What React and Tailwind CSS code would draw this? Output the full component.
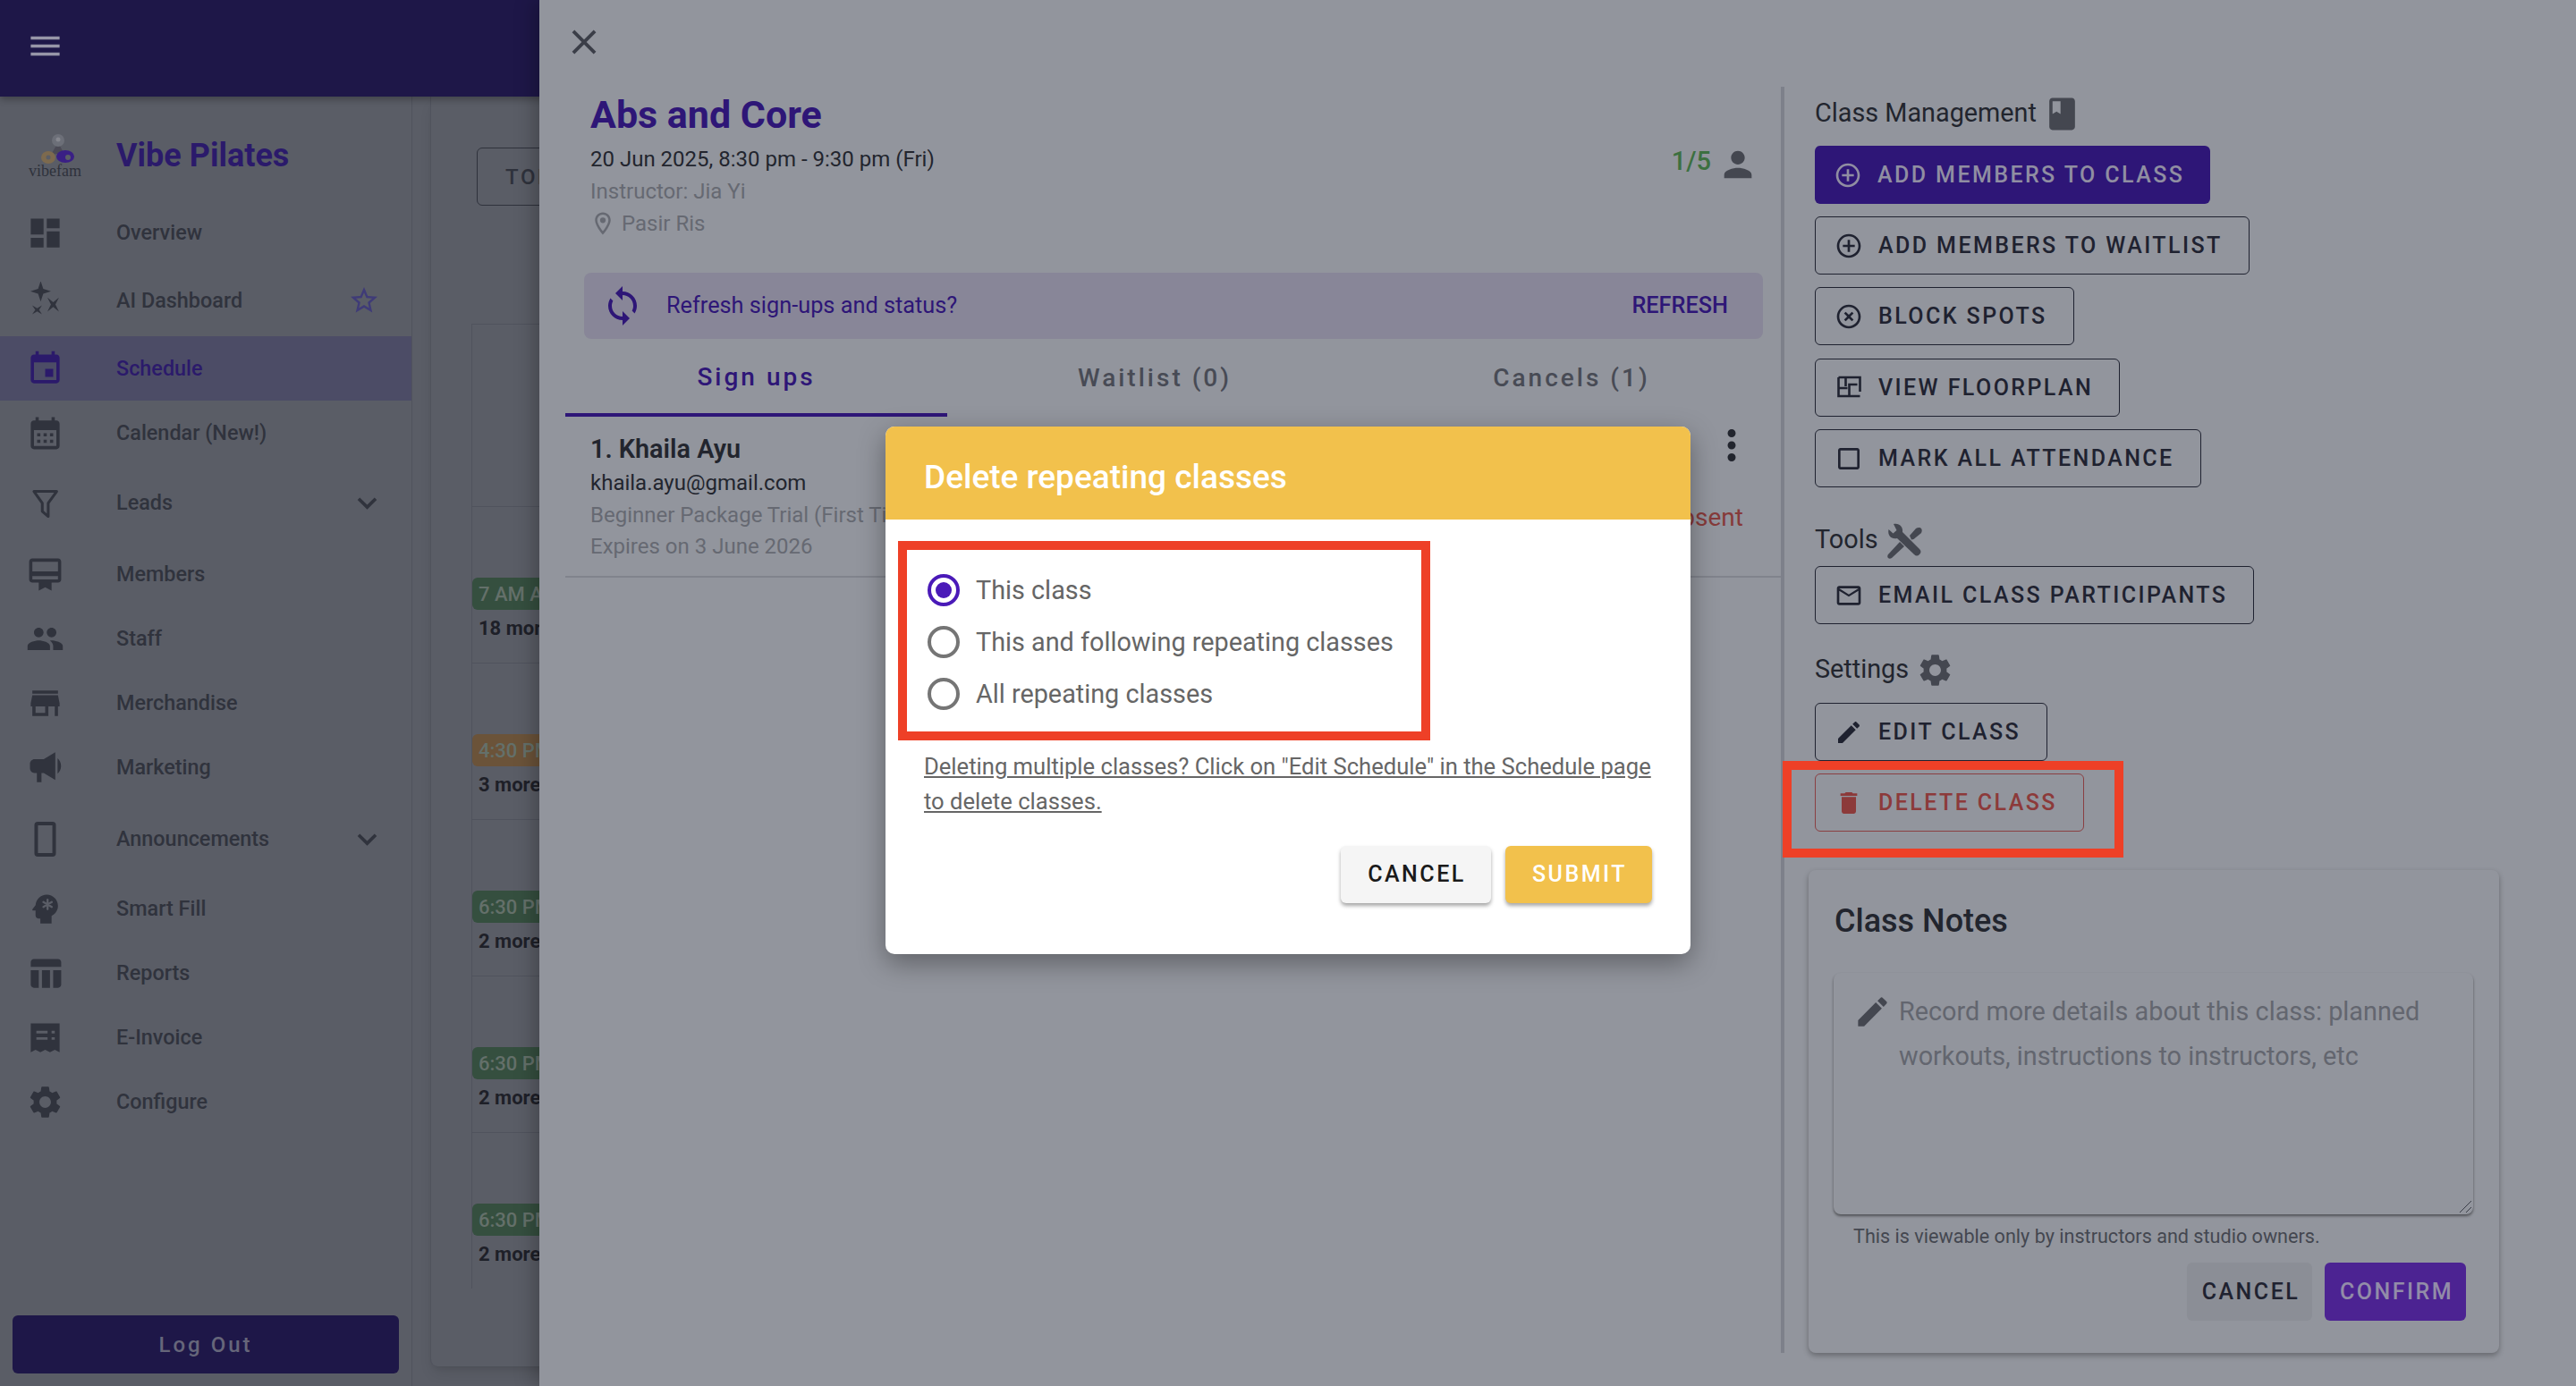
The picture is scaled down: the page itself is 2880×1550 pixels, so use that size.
import React from "react";

const paths = {
  menu: "M3 18h18v-2H3v2zm0-5h18v-2H3v2zm0-7v2h18V6H3z",
  dashboard: "M3 13h8V3H3v10zm0 8h8v-6H3v6zm10 0h8V11h-8v10zm0-18v6h8V3h-8z",
  event: "M17 12h-5v5h5v-5zM16 1v2H8V1H6v2H5c-1.11 0-1.99.9-1.99 2L3 19c0 1.1.89 2 2 2h14c1.1 0 2-.9 2-2V5c0-1.1-.9-2-2-2h-1V1h-2zm3 18H5V8h14v11z",
  calendar: "M19 4h-1V2h-2v2H8V2H6v2H5c-1.11 0-1.99.9-1.99 2L3 20c0 1.1.89 2 2 2h14c1.1 0 2-.9 2-2V6c0-1.1-.9-2-2-2zm0 16H5V10h14v10zM9 14H7v-2h2v2zm4 0h-2v-2h2v2zm4 0h-2v-2h2v2zm-8 4H7v-2h2v2zm4 0h-2v-2h2v2zm4 0h-2v-2h2v2z",
  member: "M20 2H4c-1.11 0-2 .89-2 2v11c0 1.11.89 2 2 2h4v5l4-2 4 2v-5h4c1.11 0 2-.89 2-2V4c0-1.11-.89-2-2-2zm0 13H4v-2h16v2zm0-5H4V4h16v6z",
  people: "M16 11c1.66 0 2.99-1.34 2.99-3S17.66 5 16 5c-1.66 0-3 1.34-3 3s1.34 3 3 3zm-8 0c1.66 0 2.99-1.34 2.99-3S9.66 5 8 5C6.34 5 5 6.34 5 8s1.34 3 3 3zm0 2c-2.33 0-7 1.17-7 3.5V19h14v-2.5c0-2.33-4.67-3.5-7-3.5zm8 0c-.29 0-.62.02-.97.05 1.16.84 1.97 1.97 1.97 3.45V19h6v-2.5c0-2.33-4.67-3.5-7-3.5z",
  store: "M20 4H4v2h16V4zm1 10v-2l-1-5H4l-1 5v2h1v6h10v-6h4v6h2v-6h1zm-9 4H6v-4h6v4z",
  table: "M10 10.02h5V21h-5zM17 21h3c1.1 0 2-.9 2-2v-9h-5v11zm3-18H5c-1.1 0-2 .9-2 2v3h19V5c0-1.1-.9-2-2-2zM3 19c0 1.1.9 2 2 2h3V10H3v9z",
  gear: "M19.14 12.94c.04-.3.06-.61.06-.94 0-.32-.02-.64-.07-.94l2.03-1.58c.18-.14.23-.41.12-.61l-1.92-3.32c-.12-.22-.37-.29-.59-.22l-2.39.96c-.5-.38-1.03-.7-1.62-.94l-.36-2.54c-.04-.24-.24-.41-.48-.41h-3.84c-.24 0-.43.17-.47.41l-.36 2.54c-.59.24-1.13.57-1.62.94l-2.39-.96c-.22-.08-.47 0-.59.22L2.74 8.87c-.12.21-.08.47.12.61l2.03 1.58c-.05.3-.09.63-.09.94s.02.64.07.94l-2.03 1.58c-.18.14-.23.41-.12.61l1.92 3.32c.12.22.37.29.59.22l2.39-.96c.5.38 1.03.7 1.62.94l.36 2.54c.05.24.24.41.48.41h3.84c.24 0 .44-.17.47-.41l.36-2.54c.59-.24 1.13-.56 1.62-.94l2.39.96c.22.08.47 0 .59-.22l1.92-3.32c.12-.22.07-.47-.12-.61l-2.01-1.58zM12 15.6c-1.98 0-3.6-1.62-3.6-3.6s1.62-3.6 3.6-3.6 3.6 1.62 3.6 3.6-1.62 3.6-3.6 3.6z",
  star: "M22 9.24l-7.19-.62L12 2 9.19 8.63 2 9.24l5.46 4.73L5.82 21 12 17.27 18.18 21l-1.63-7.03L22 9.24zM12 15.4l-3.76 2.27 1-4.28-3.32-2.88 4.38-.38L12 6.1l1.71 4.04 4.38.38-3.32 2.88 1 4.28L12 15.4z",
  chevron: "M16.59 8.59 12 13.17 7.41 8.59 6 10l6 6 6-6z",
  close: "M19 6.41 17.59 5 12 10.59 6.41 5 5 6.41 10.59 12 5 17.59 6.41 19 12 13.41 17.59 19 19 17.59 13.41 12z",
  person: "M12 12c2.21 0 4-1.79 4-4s-1.79-4-4-4-4 1.79-4 4 1.79 4 4 4zm0 2c-2.67 0-8 1.34-8 4v2h16v-2c0-2.66-5.33-4-8-4z",
  pin: "M12 2C8.13 2 5 5.13 5 9c0 5.25 7 13 7 13s7-7.75 7-13c0-3.87-3.13-7-7-7zM7 9c0-2.76 2.24-5 5-5s5 2.24 5 5c0 2.88-2.88 7.19-5 9.88C9.92 16.21 7 11.85 7 9zm5-2.5a2.5 2.5 0 1 0 0 5 2.5 2.5 0 0 0 0-5z",
  sync: "M12 4V1L8 5l4 4V6c3.31 0 6 2.69 6 6 0 1.01-.25 1.97-.7 2.8l1.46 1.46C19.54 15.03 20 13.57 20 12c0-4.42-3.58-8-8-8zm0 14c-3.31 0-6-2.69-6-6 0-1.01.25-1.97.7-2.8L5.24 7.74C4.46 8.97 4 10.43 4 12c0 4.42 3.58 8 8 8v3l4-4-4-4v3z",
  more: "M12 8c1.1 0 2-.9 2-2s-.9-2-2-2-2 .9-2 2 .9 2 2 2zm0 2c-1.1 0-2 .9-2 2s.9 2 2 2 2-.9 2-2-.9-2-2-2zm0 6c-1.1 0-2 .9-2 2s.9 2 2 2 2-.9 2-2-.9-2-2-2z",
  book: "M18 2H6c-1.1 0-2 .9-2 2v16c0 1.1.9 2 2 2h12c1.1 0 2-.9 2-2V4c0-1.1-.9-2-2-2zM6 4h5v8l-2.5-1.5L6 12V4z",
  addCircle: "M13 7h-2v4H7v2h4v4h2v-4h4v-2h-4V7zm-1-5C6.48 2 2 6.48 2 12s4.48 10 10 10 10-4.48 10-10S17.52 2 12 2zm0 18c-4.41 0-8-3.59-8-8s3.59-8 8-8 8 3.59 8 8-3.59 8-8 8z",
  xCircle: "M14.59 8 12 10.59 9.41 8 8 9.41 10.59 12 8 14.59 9.41 16 12 13.41 14.59 16 16 14.59 13.41 12 16 9.41 14.59 8zM12 2C6.47 2 2 6.47 2 12s4.47 10 10 10 10-4.47 10-10S17.53 2 12 2zm0 18c-4.41 0-8-3.59-8-8s3.59-8 8-8 8 3.59 8 8-3.59 8-8 8z",
  blank: "M19 5v14H5V5h14m0-2H5c-1.1 0-2 .9-2 2v14c0 1.1.9 2 2 2h14c1.1 0 2-.9 2-2V5c0-1.1-.9-2-2-2z",
  mail: "M20 4H4c-1.1 0-1.99.9-1.99 2L2 18c0 1.1.9 2 2 2h16c1.1 0 2-.9 2-2V6c0-1.1-.9-2-2-2zm0 14H4V8l8 5 8-5v10zm-8-7L4 6h16l-8 5z",
  edit: "M3 17.25V21h3.75L17.81 9.94l-3.75-3.75L3 17.25zM20.71 7.04c.39-.39.39-1.02 0-1.41l-2.34-2.34c-.39-.39-1.02-.39-1.41 0l-1.83 1.83 3.75 3.75 1.83-1.83z",
  trash: "M6 19c0 1.1.9 2 2 2h8c1.1 0 2-.9 2-2V7H6v12zM19 4h-3.5l-1-1h-5l-1 1H5v2h14V4z",
};

const Icon = ({ d, className }) => (
  <svg viewBox="0 0 24 24" fill="currentColor" className={className}>
    <path d={d} />
  </svg>
);

const SparkIcon = ({ className }) => (
  <svg viewBox="0 0 24 24" fill="currentColor" className={className}>
    <path d="M9.2-.4L10.8 4.4 15.6 6 10.8 7.6 9.2 12.4 7.6 7.6 2.8 6 7.6 4.4z" />
    <path d="M13.4 9.9L17 12.9 20.6 9.9 18.4 14.3 20.6 18.7 17 15.7 13.4 18.7 15.6 14.3z" />
    <path d="M3.9 14.8L7 16.6 10 14.8 8.2 17.6 10 20.4 7 18.6 3.9 20.4 5.8 17.6z" />
  </svg>
);

const FunnelIcon = ({ className }) => (
  <svg viewBox="0 0 24 24" fill="none" stroke="currentColor" strokeWidth="1.7" strokeLinejoin="round" className={className}>
    <path d="M5 4.8h14.2l-5.3 7.3v8.3l-3.7-3.2v-5.1z" />
  </svg>
);

const MegaphoneIcon = ({ className }) => (
  <svg viewBox="1.8 5.5 14 14" fill="currentColor" className={className}>
    <path d="M4 9c-1.1 0-2 .9-2 2v2c0 1.1.9 2 2 2h1v4h2v-4h1l5 3V6L8 9H4zm11.5 3c0-1.33-.58-2.53-1.5-3.35v6.69c.92-.81 1.5-2.01 1.5-3.34z" />
  </svg>
);

const TabletIcon = ({ className }) => (
  <svg viewBox="0 0 24 24" fill="none" stroke="currentColor" strokeWidth="2.2" className={className}>
    <rect x="6.4" y="2.2" width="11.2" height="19.6" rx="1" />
  </svg>
);

const BrainIcon = ({ className }) => (
  <svg viewBox="0 0 24 24" className={className}>
    <path fill="currentColor" d="M13 3C9.25 3 6.2 5.94 6.02 9.64L4.1 12.2c-.25.33-.01.8.4.8H6v3c0 1.1.9 2 2 2h1v3h7v-4.68c2.36-1.12 4-3.53 4-6.32 0-3.87-3.13-7-7-7z" />
    <path stroke="#5a5d66" strokeWidth="1.3" strokeLinecap="round" d="M13.5 6.2v6M10.9 7.7l5.2 3M16.1 7.7l-5.2 3" />
  </svg>
);

const ReceiptIcon = ({ className }) => (
  <svg viewBox="0 0 24 24" className={className}>
    <path fill="currentColor" d="M3 3h18v18l-3-1.4-3 1.4-3-1.4-3 1.4-3-1.4-3 1.4z" />
    <path stroke="#5a5d66" strokeWidth="1.6" d="M6.5 8.5h7M6.5 12.5h7M16 8.5h2M16 12.5h2" />
  </svg>
);

const FloorplanIcon = ({ className }) => (
  <svg viewBox="6.5 7 32 32" fill="none" stroke="currentColor" strokeWidth="2.6" className={className}>
    <path d="M11 11h24v16M35 32H11V11M19 11v10M11 23h10M23 32V19h9" />
  </svg>
);

const ToolsIcon = ({ className }) => (
  <svg viewBox="0 0 56 50" fill="currentColor" className={className}>
    <path d="M15 7c6-1.500 11 3 10 9l19 19c2 2 2 4 0 6s-4 2-6 0L19 23c-6 1.500-11-3-9.500-10l5 4.500 4-3.500z" />
    <path d="M33 20l7-8c2-1.500 5-1.500 6 0s1 4-.5 5.500l-8 6.500-2.500.5z" />
    <path d="M22 27l5 5-14 13c-1.500 1-3 1-4 0s-1-2.500 0-4z" />
  </svg>
);

const VibeLogo = () => (
  <div className="w-[57px] flex flex-col items-center">
    <svg viewBox="0 0 57 36" className="w-[57px] h-[36px]">
      <path d="M32 10l-8 14 14-2z" fill="#4b4a55" />
      <circle cx="32" cy="8" r="7" fill="#6c6f78" />
      <circle cx="32" cy="7" r="2.5" fill="#85878e" />
      <ellipse cx="21" cy="27" rx="8" ry="7" fill="#7d6a4e" />
      <circle cx="21" cy="27" r="2.5" fill="#5a5d66" />
      <ellipse cx="40" cy="26" rx="10" ry="7" fill="#3a1f85" />
      <circle cx="43" cy="27" r="3" fill="#5a5d66" />
    </svg>
    <span className="mt-[-3px] text-[18px] leading-[18px] font-['Liberation_Serif',serif] text-[#2f323c]">vibefam</span>
  </div>
);

const navItems = [
  { label: "Overview", icon: <Icon d={paths.dashboard} className="w-[43px] h-[43px]" />, gap: "" },
  { label: "AI Dashboard", icon: <SparkIcon className="w-[43px] h-[43px]" />, gap: "mt-[4px]", star: true },
  { label: "Schedule", icon: <Icon d={paths.event} className="w-[43px] h-[43px]" />, gap: "mt-[4px]", active: true },
  { label: "Calendar (New!)", icon: <Icon d={paths.calendar} className="w-[43px] h-[43px]" />, gap: "" },
  { label: "Leads", icon: <FunnelIcon className="w-[43px] h-[43px]" />, gap: "mt-[6px]", expand: true },
  { label: "Members", icon: <Icon d={paths.member} className="w-[43px] h-[43px]" />, gap: "mt-[8px]" },
  { label: "Staff", icon: <Icon d={paths.people} className="w-[43px] h-[43px]" />, gap: "" },
  { label: "Merchandise", icon: <Icon d={paths.store} className="w-[43px] h-[43px]" />, gap: "" },
  { label: "Marketing", icon: <MegaphoneIcon className="w-[36px] h-[36px] mx-[3px]" />, gap: "" },
  { label: "Announcements", icon: <TabletIcon className="w-[43px] h-[43px]" />, gap: "mt-[8px]", expand: true },
  { label: "Smart Fill", icon: <BrainIcon className="w-[43px] h-[43px]" />, gap: "mt-[6px]" },
  { label: "Reports", icon: <Icon d={paths.table} className="w-[43px] h-[43px]" />, gap: "" },
  { label: "E-Invoice", icon: <ReceiptIcon className="w-[43px] h-[43px]" />, gap: "" },
  { label: "Configure", icon: <Icon d={paths.gear} className="w-[43px] h-[43px]" />, gap: "" },
];

const Sidebar = () => (
  <aside className="w-[461px] h-full flex flex-col border-r border-[#50535d] bg-[#5a5d66]">
    <div className="h-[116px] pt-[16px] pl-[33px] flex items-center gap-[40px]">
      <VibeLogo />
      <div className="text-[36px] leading-[44px] font-bold text-[#2b1a6b]">Vibe Pilates</div>
    </div>
    {/* menu */}
    {navItems.map((item) => (
      <div
        key={item.label}
        className={`h-[72px] shrink-0 pl-[29px] pr-[28px] flex items-center ${item.gap} ${item.active ? "bg-[#4c4c66] text-[#2b1a6b]" : "text-[#30333d]"}`}
      >
        <span className="w-[43px] flex justify-center">{item.icon}</span>
        <span className="ml-[58px] pt-[2px] text-[23.4px] font-medium flex-1">{item.label}</span>
        {item.star && <Icon d={paths.star} className="w-[36px] h-[36px] mr-[7px] text-[#3f3b78]" />}
        {item.expand && <Icon d={paths.chevron} className="w-[43px] h-[43px]" />}
      </div>
    ))}
    <div className="mt-auto mb-[14px] mx-[14px] h-[65px] rounded-md bg-[#1e1748] flex items-center justify-center text-[24px] font-medium tracking-[3px] text-[#66667a]">
      Log Out
    </div>
  </aside>
);

const chips = [
  { time: "7 AM Abs", more: "18 more", color: "bg-[#354f3f]" },
  { time: "4:30 PM Abs", more: "3 more", color: "bg-[#6b5339]" },
  { time: "6:30 PM Abs", more: "2 more", color: "bg-[#354f3f]" },
  { time: "6:30 PM Abs", more: "2 more", color: "bg-[#354f3f]" },
  { time: "6:30 PM Abs", more: "2 more", color: "bg-[#354f3f]" },
];

const CalendarCard = () => (
  <main className="flex-1 h-full pl-[20px] bg-[#5a5d66] overflow-hidden">
    <div className="w-[900px] h-[1420px] rounded-bl-lg border-l border-[#50535d] bg-[#5a5d66] shadow-lg pl-[45px] pt-[57px]">
      <div className="ml-[6px] w-[200px] h-[65px] rounded-md border border-[#2f323c] pl-[31px] flex items-center text-[24px] font-medium tracking-[2.6px] text-[#2f323c]">
        TODAY
      </div>
      <div className="mt-[132px] w-[500px] border-l border-[#50535d]">
        <div className="h-[204px] border-t border-[#50535d]" />
        {chips.map((c, i) => (
          <div key={i} className="h-[175px] border-t border-[#50535d] pt-[79px]">
            <div className={`h-[36px] rounded-md pl-[7px] flex items-center text-[22px] font-medium text-[#64706a] ${c.color}`}>
              {c.time}
            </div>
            <div className="pl-[7px] mt-[6px] text-[22px] leading-[30px] font-bold text-[#1e2028]">{c.more}</div>
          </div>
        ))}
      </div>
    </div>
  </main>
);

const ActionButton = ({ icon, children, variant = "outline" }) => {
  const look = {
    outline: "border border-[#1f2230] text-[#1f2230]",
    solid: "bg-[#2e1677] text-[#908ea2]",
    danger: "border border-[#8a3f42] text-[#8c3a3a]",
  }[variant];
  return (
    <div className={`w-fit h-[65px] rounded-md pl-[21px] pr-[29px] flex items-center gap-[17px] ${look}`}>
      <Icon d={icon} className="w-[32px] h-[32px]" />
      <span className="text-[25px] font-medium tracking-[2.42px] whitespace-nowrap">{children}</span>
    </div>
  );
};

const Heading = ({ children, className }) => (
  <div className={`h-[40px] flex items-center text-[28.8px] text-[#22252e] ${className}`}>{children}</div>
);

const SignUps = () => (
  <section className="w-[1388px] shrink-0 pl-[29px]">
    <button className="block ml-[-2px] mt-[24px] text-[#3b3e48]">
      <Icon d={paths.close} className="w-[46px] h-[46px]" />
    </button>
    {/* class summary */}
    <div className="mt-[32px] pl-[28px] w-[1334px] flex items-center justify-between">
      <div>
        <h1 className="text-[43px] leading-[52px] font-bold text-[#2e1677]">Abs and Core</h1>
        <p className="mt-[8px] text-[24px] leading-[32px] text-[#22252e]">20 Jun 2025, 8:30 pm - 9:30 pm (Fri)</p>
        <p className="mt-[4px] text-[24px] leading-[32px] text-[#666972]">Instructor: Jia Yi</p>
        <p className="mt-[4px] flex items-center text-[24px] leading-[32px] text-[#666972]">
          <Icon d={paths.pin} className="w-[30px] h-[30px] ml-[-1px] mr-[6px]" />
          Pasir Ris
        </p>
      </div>
      <div className="flex items-center gap-[7px]">
        <span className="text-[29px] font-medium text-[#3c7040] mt-[-6px]">1/5</span>
        <Icon d={paths.person} className="w-[46px] h-[46px] text-[#444750]" />
      </div>
    </div>
    <div className="mt-[39px] ml-[21px] w-[1318px] h-[74px] rounded-lg bg-[#888698] pl-[19px] pr-[39px] flex items-center text-[#2e1677]">
      <Icon d={paths.sync} className="w-[48px] h-[48px]" />
      <span className="ml-[25px] text-[25.3px] flex-1">Refresh sign-ups and status?</span>
      <span className="text-[25.3px] font-medium">REFRESH</span>
    </div>
    <div className="flex h-[87px] text-[28px] font-medium tracking-[3px] text-[#484b55]">
      <div className="w-[427px] pt-[2px] flex items-center justify-center border-b-4 border-[#2e1677] text-[#2e1677]">Sign ups</div>
      <div className="w-[464px] flex items-center justify-center">Waitlist (0)</div>
      <div className="w-[468px] flex items-center justify-center">Cancels (1)</div>
    </div>
    {/* sign up row */}
    <div className="h-[180px] w-[1361px] pl-[28px] pr-[44px] pt-[18px] border-b-2 border-[#80838c] flex justify-between">
      <div className="min-w-0">
        <div className="text-[28.8px] leading-[36px] font-semibold text-[#22252e]">1. Khaila Ayu</div>
        <div className="mt-[4px] text-[24px] leading-[32px] text-[#22252e]">khaila.ayu@gmail.com</div>
        <div className="mt-[4px] text-[24px] leading-[32px] text-[#666972]">Beginner Package Trial (First Timers Only)</div>
        <div className="mt-[3px] text-[24px] leading-[32px] text-[#666972]">Expires on 3 June 2026</div>
      </div>
      <div className="flex flex-col items-end mt-[-13px]">
        <Icon d={paths.more} className="w-[54px] h-[54px] mr-[-14px] text-[#22252e]" />
        <span className="mt-[38px] text-[28px] leading-[32px] text-[#863a3a]">Absent</span>
      </div>
    </div>
  </section>
);

const ClassNotes = () => (
  <div className="mt-[43px] ml-[-7px] w-[772px] h-[540px] rounded-lg bg-[#92959d] shadow-[0_3px_6px_rgba(0,0,0,0.3)] pl-[29px] pr-[36px] pt-[35px]">
    <h2 className="text-[36px] leading-[44px] font-medium text-[#22252e]">Class Notes</h2>
    <div className="mt-[36px] ml-[-1px] w-[715px] h-[270px] rounded-lg shadow-[0_2px_3px_rgba(0,0,0,0.45)] pl-[22px] pt-[18px] flex relative">
      <Icon d={paths.edit} className="w-[43px] h-[43px] mt-[4px] text-[#444750] shrink-0" />
      <div className="ml-[8px] text-[28.8px] leading-[50px] text-[#63666f] w-[640px]">
        Record more details about this class: planned workouts, instructions to instructors, etc
      </div>
      <svg viewBox="0 0 16 16" className="absolute right-[1px] bottom-[1px] w-[16px] h-[16px]" stroke="#3b3e48" strokeWidth="1">
        <path d="M2 15L15 2M9 15l6-6" />
      </svg>
    </div>
    <p className="mt-[10px] ml-[21px] text-[21.6px] leading-[30px] text-[#444750]">This is viewable only by instructors and studio owners.</p>
    <div className="mt-[14px] flex justify-end gap-[14px] pr-[1px]">
      <div className="w-[140px] h-[65px] pl-[3px] rounded-md bg-[#8b8e96] flex items-center justify-center text-[25px] font-medium tracking-[2.5px] text-[#1f2230]">CANCEL</div>
      <div className="w-[158px] h-[65px] pl-[3px] rounded-md bg-[#4c2392] flex items-center justify-center text-[25px] font-medium tracking-[2.5px] text-[#928ca8]">CONFIRM</div>
    </div>
  </div>
);

const ClassManagement = () => (
  <section className="pl-[34px] pt-[107px]">
    <Heading className="gap-[7px]">
      Class Management
      <Icon d={paths.book} className="w-[43px] h-[43px] text-[#444750]" />
    </Heading>
    <div className="mt-[16px] flex flex-col gap-[14px]">
      <ActionButton icon={paths.addCircle} variant="solid">ADD MEMBERS TO CLASS</ActionButton>
      <ActionButton icon={paths.addCircle}>ADD MEMBERS TO WAITLIST</ActionButton>
      <ActionButton icon={paths.xCircle}>BLOCK SPOTS</ActionButton>
      <div className="w-fit mt-[1px] h-[65px] rounded-md border border-[#1f2230] text-[#1f2230] pl-[21px] pr-[29px] flex items-center gap-[17px]">
        <FloorplanIcon className="w-[32px] h-[32px]" />
        <span className="text-[25px] font-medium tracking-[2.42px]">VIEW FLOORPLAN</span>
      </div>
      <ActionButton icon={paths.blank}>MARK ALL ATTENDANCE</ActionButton>
    </div>
    <Heading className="mt-[39px] gap-[2px]">
      Tools
      <ToolsIcon className="w-[56px] h-[50px] text-[#444750]" />
    </Heading>
    <div className="mt-[9px]">
      <ActionButton icon={paths.mail}>EMAIL CLASS PARTICIPANTS</ActionButton>
    </div>
    <Heading className="mt-[31px] gap-[8px]">
      Settings
      <Icon d={paths.gear} className="w-[43px] h-[43px] text-[#444750]" />
    </Heading>
    <div className="mt-[17px] flex flex-col gap-[14px]">
      <ActionButton icon={paths.edit}>EDIT CLASS</ActionButton>
      <ActionButton icon={paths.trash} variant="danger">DELETE CLASS</ActionButton>
    </div>
    <ClassNotes />
  </section>
);

const Radio = ({ checked, children }) => (
  <label className="flex items-center h-[58px] gap-[18px]">
    <span className={`w-[36px] h-[36px] rounded-full border-[4px] flex items-center justify-center ${checked ? "border-[#4a1ab8]" : "border-[#757575]"}`}>
      {checked && <span className="w-[18px] h-[18px] rounded-full bg-[#4a1ab8]" />}
    </span>
    <span className="pt-[2px] text-[28.8px] text-[#666666]">{children}</span>
  </label>
);

const DeleteDialog = () => (
  <div className="absolute left-[990px] top-[477px] w-[900px] h-[590px] rounded-[10px] bg-white overflow-hidden shadow-[0_10px_30px_rgba(0,0,0,0.35)]">
    <div className="h-[104px] bg-[#f2c14c] pl-[43px] pt-[10px] flex items-center text-[37px] font-medium text-white">
      Delete repeating classes
    </div>
    <div className="pl-[47px] pt-[50px]">
      <Radio checked>This class</Radio>
      <Radio>This and following repeating classes</Radio>
      <Radio>All repeating classes</Radio>
    </div>
    <p className="mt-[33px] pl-[43px] w-[870px] text-[25.6px] leading-[39px] underline text-[#666666]">
      Deleting multiple classes? Click on "Edit Schedule" in the Schedule page to delete classes.
    </p>
    <div className="mt-[30px] pr-[43px] flex justify-end gap-[16px]">
      <div className="w-[168px] h-[64px] pl-[2px] rounded-md bg-[#f5f5f5] shadow-[0_3px_4px_rgba(0,0,0,0.35)] flex items-center justify-center text-[25px] font-medium tracking-[2.5px] text-[#1a1a1a]">CANCEL</div>
      <div className="w-[164px] h-[64px] pl-[2px] rounded-md bg-[#f2c14c] shadow-[0_3px_4px_rgba(0,0,0,0.35)] flex items-center justify-center text-[25px] font-medium tracking-[2.5px] text-white">SUBMIT</div>
    </div>
  </div>
);

export default function App() {
  return (
    <div className="relative w-[2880px] h-[1550px] overflow-hidden font-['Roboto',sans-serif] bg-[#5a5d66]">
      <header className="relative z-10 h-[108px] bg-[#1e1748] pl-[29px] pb-[5px] flex items-center text-[#9796a8] shadow-[0_3px_8px_rgba(0,0,0,0.3)]">
        <Icon d={paths.menu} className="w-[43px] h-[43px]" />
      </header>
      <div className="flex h-[1442px]">
        <Sidebar />
        <CalendarCard />
      </div>

      {/* class drawer */}
      <div className="absolute z-20 left-[603px] top-0 w-[2277px] h-[1550px] bg-[#92959d] flex shadow-[-6px_0_20px_rgba(0,0,0,0.25)]">
        <SignUps />
        <div className="w-[4px] h-[1416px] mt-[97px] bg-[#7d808a] shrink-0" />
        <ClassManagement />
      </div>

      <div className="absolute z-30 inset-0 pointer-events-none">
        <DeleteDialog />
        {/* annotation boxes */}
        <div className="absolute left-[1004px] top-[605px] w-[595px] h-[223px] border-[10px] border-[#ee4027]" />
        <div className="absolute left-[1993px] top-[851px] w-[381px] h-[108px] border-[10px] border-[#ee4027]" />
      </div>
    </div>
  );
}
